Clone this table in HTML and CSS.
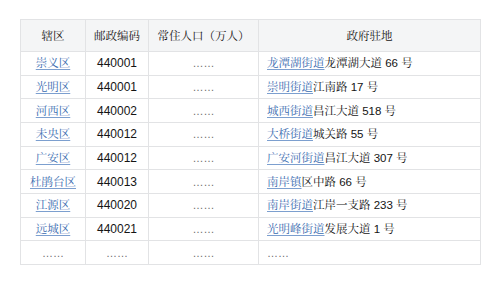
FILE: index.html
```html
<!DOCTYPE html>
<html lang="zh-CN">
<head>
<meta charset="utf-8">
<title>辖区</title>
<link rel="stylesheet" href="styles.css">
</head>
<body>
<table class="wikitable">
  <colgroup>
    <col class="c1"><col class="c2"><col class="c3"><col class="c4">
  </colgroup>
  <thead>
    <tr class="head">
      <th>辖区</th><th>邮政编码</th><th>常住人口（万人）</th><th>政府驻地</th>
    </tr>
  </thead>
  <tbody>
    <tr><td class="ctr"><a href="#">崇义区</a></td><td class="ctr num">440001</td><td class="ctr dots">……</td><td class="addr"><a href="#">龙潭湖街道</a>龙潭湖大道 66 号</td></tr>
    <tr><td class="ctr"><a href="#">光明区</a></td><td class="ctr num">440001</td><td class="ctr dots">……</td><td class="addr"><a href="#">崇明街道</a>江南路 17 号</td></tr>
    <tr><td class="ctr"><a href="#">河西区</a></td><td class="ctr num">440002</td><td class="ctr dots">……</td><td class="addr"><a href="#">城西街道</a>昌江大道 518 号</td></tr>
    <tr><td class="ctr"><a href="#">未央区</a></td><td class="ctr num">440012</td><td class="ctr dots">……</td><td class="addr"><a href="#">大桥街道</a>城关路 55 号</td></tr>
    <tr><td class="ctr"><a href="#">广安区</a></td><td class="ctr num">440012</td><td class="ctr dots">……</td><td class="addr"><a href="#">广安河街道</a>昌江大道 307 号</td></tr>
    <tr><td class="ctr"><a href="#">杜鹃台区</a></td><td class="ctr num">440013</td><td class="ctr dots">……</td><td class="addr"><a href="#">南岸镇</a>区中路 66 号</td></tr>
    <tr><td class="ctr"><a href="#">江源区</a></td><td class="ctr num">440020</td><td class="ctr dots">……</td><td class="addr"><a href="#">南岸街道</a>江岸一支路 233 号</td></tr>
    <tr><td class="ctr"><a href="#">远城区</a></td><td class="ctr num">440021</td><td class="ctr dots">……</td><td class="addr"><a href="#">光明峰街道</a>发展大道 1 号</td></tr>
    <tr><td class="ctr dots">……</td><td class="ctr dots">……</td><td class="ctr dots">……</td><td class="addr dots">……</td></tr>
  </tbody>
</table>
</body>
</html>
```

FILE: styles.css
```css
html, body {
  margin: 0;
  padding: 0;
  background: #ffffff;
}

body {
  padding: 19px 0 0 20px;
  font-family: "Liberation Sans", "Noto Serif CJK SC", "Noto Sans CJK SC", sans-serif;
  font-size: 11.5px;
  color: #141414;
}

.wikitable {
  border-collapse: collapse;
  table-layout: fixed;
  width: 460px;
  background: #ffffff;
}

.c1 { width: 65px; }
.c2 { width: 63px; }
.c3 { width: 110px; }
.c4 { width: 222px; }

.wikitable th,
.wikitable td {
  border: 1px solid #e2e3e5;
  padding: 0;
  line-height: 14px;
  vertical-align: middle;
  white-space: nowrap;
}

.wikitable th {
  background: #f4f5f6;
  font-weight: normal;
  text-align: center;
}

.head {
  height: 32px;
}

.wikitable tbody tr {
  height: 23.67px;
}

.ctr {
  text-align: center;
}

.num {
  font-size: 12px;
}

.addr {
  text-align: left;
  padding-left: 8px !important;
}

.dots {
  color: #6e6e6e;
  font-size: 11px;
  letter-spacing: 0;
}

a {
  color: #3a6cb0;
  text-decoration: underline;
  text-decoration-color: #7c9fcf;
  text-underline-offset: 2px;
}
```
